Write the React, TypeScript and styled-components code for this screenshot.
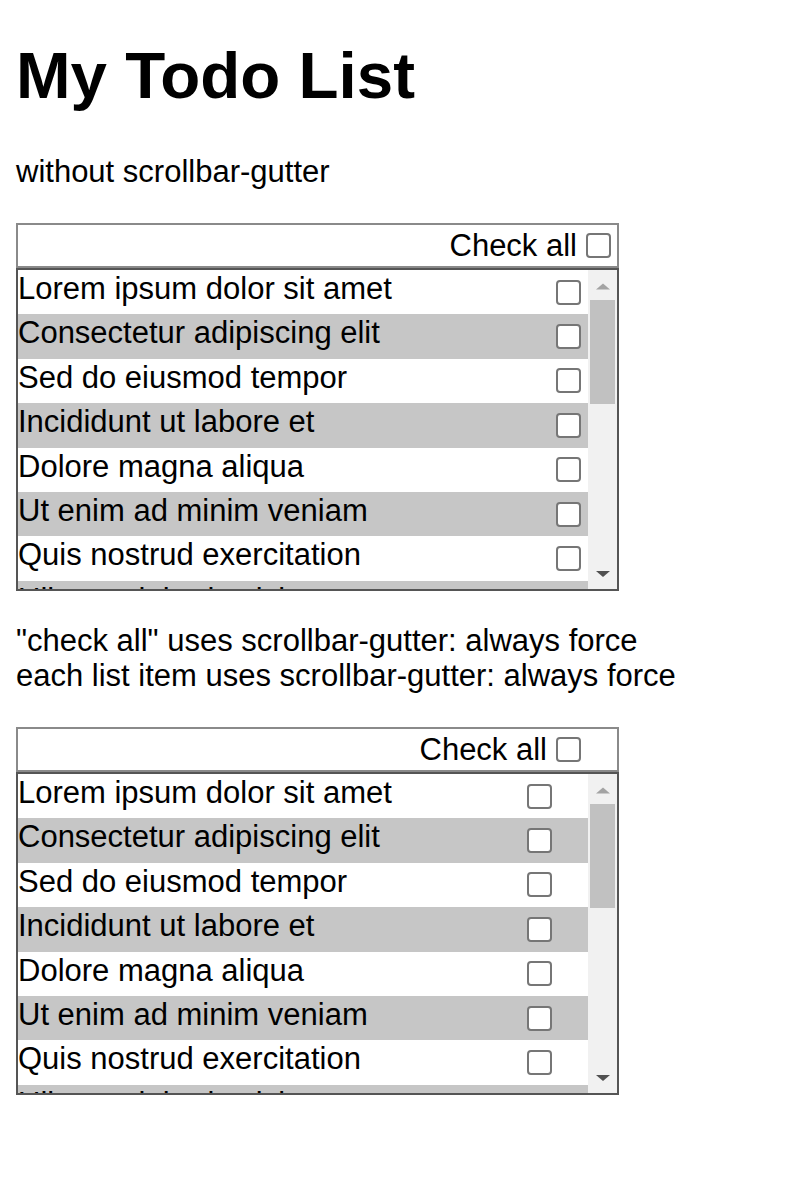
import React, { useState } from "react";
import styled, { createGlobalStyle } from "styled-components";

const GlobalStyle = createGlobalStyle`
  html, body {
    margin: 0;
    padding: 0;
    background: #ffffff;
  }
  body {
    font-family: "Liberation Sans", Arial, Helvetica, sans-serif;
    color: #000000;
  }
`;

const Page = styled.main`
  padding: 0 16px 40px;
  font-size: 31px;
  line-height: 36px;
`;

const Title = styled.h1`
  margin: 39px 0 0;
  font-size: 65.5px;
  line-height: 74px;
  font-weight: 700;
`;

const Note = styled.p<{ $top: number }>`
  margin: ${(p) => p.$top}px 0 0;
  line-height: 35px;
`;

const Container = styled.section`
  margin-top: 34px;
  width: 603px;
  display: flex;
  flex-direction: column;
`;

const CheckAllBar = styled.label<{ $gutter: boolean }>`
  display: flex;
  justify-content: flex-end;
  align-items: center;
  height: 41px;
  border: 2px solid #8a8a8a;
  padding-right: ${(p) => (p.$gutter ? 30 : 0)}px;
  cursor: pointer;
`;

const Box = styled.input.attrs({ type: "checkbox" })<{ $right: number }>`
  appearance: none;
  -webkit-appearance: none;
  box-sizing: border-box;
  flex: none;
  width: 25px;
  height: 25px;
  margin: 0 ${(p) => p.$right}px 0 9px;
  border: 2px solid #767676;
  border-radius: 4px;
  background: #ffffff;
  cursor: pointer;

  &:checked {
    background: #0075ff;
    border-color: #0075ff;
  }
`;

const ListFrame = styled.div`
  display: flex;
  height: 319px;
  border: 2px solid #555555;
`;

const Items = styled.ul`
  list-style: none;
  margin: 0;
  padding: 0;
  flex: 1;
  min-width: 0;
  overflow: hidden;
`;

const Item = styled.li<{ $alt: boolean; $gutter: boolean }>`
  display: flex;
  justify-content: space-between;
  align-items: center;
  height: 44.4px;
  background: ${(p) => (p.$alt ? "#c6c6c6" : "transparent")};
  padding-right: ${(p) => (p.$gutter ? 29 : 0)}px;
  white-space: nowrap;
`;

const ItemText = styled.span`
  align-self: flex-start;
  padding-top: 1px;
  line-height: 36px;
`;

const Scrollbar = styled.div`
  flex: none;
  width: 29px;
  background: #f1f1f1;
  display: flex;
  flex-direction: column;
  align-items: center;
`;

const ScrollButton = styled.div`
  flex: none;
  width: 29px;
  height: 29px;
  display: flex;
`;

const Thumb = styled.div`
  flex: none;
  width: 25px;
  height: 104px;
  margin-top: 1px;
  background: #c1c1c1;
`;

const Track = styled.div`
  flex: 1;
`;

const todos = [
  "Lorem ipsum dolor sit amet",
  "Consectetur adipiscing elit",
  "Sed do eiusmod tempor",
  "Incididunt ut labore et",
  "Dolore magna aliqua",
  "Ut enim ad minim veniam",
  "Quis nostrud exercitation",
  "Ullamco laboris nisi ut",
  "Aliquip ex ea commodo",
  "Duis aute irure dolor",
  "In reprehenderit in voluptate",
  "Velit esse cillum dolore",
  "Eu fugiat nulla pariatur",
  "Excepteur sint occaecat",
  "Cupidatat non proident",
  "Sunt in culpa qui officia",
  "Deserunt mollit anim",
  "Id est laborum",
  "Sed ut perspiciatis unde",
  "Omnis iste natus error",
];

const UpArrow = () => (
  <svg width="29" height="29" viewBox="0 0 29 29">
    <polygon points="8,19.5 22,19.5 15,13.5" fill="#a3a3a3" />
  </svg>
);

const DownArrow = () => (
  <svg width="29" height="29" viewBox="0 0 29 29">
    <polygon points="8,11 22,11 15,17" fill="#505050" />
  </svg>
);

function TodoBlock({ gutter }: { gutter: boolean }) {
  const [checked, setChecked] = useState<boolean[]>(() => todos.map(() => false));
  const all = checked.every(Boolean);

  return (
    <Container>
      <CheckAllBar $gutter={gutter}>
        Check all
        <Box
          $right={6}
          checked={all}
          onChange={(e) => setChecked(todos.map(() => e.target.checked))}
        />
      </CheckAllBar>
      <ListFrame>
        <Items>
          {todos.map((t, i) => (
            <Item key={t} $alt={i % 2 === 1} $gutter={gutter}>
              <ItemText>{t}</ItemText>
              <Box
                $right={7}
                checked={checked[i]}
                onChange={(e) =>
                  setChecked((prev) => prev.map((v, j) => (j === i ? e.target.checked : v)))
                }
              />
            </Item>
          ))}
        </Items>
        <Scrollbar>
          <ScrollButton>
            <UpArrow />
          </ScrollButton>
          <Thumb />
          <Track />
          <ScrollButton>
            <DownArrow />
          </ScrollButton>
        </Scrollbar>
      </ListFrame>
    </Container>
  );
}

export default function App() {
  return (
    <>
      <GlobalStyle />
      <Page>
        <Title>My Todo List</Title>
        <Note $top={41}>without scrollbar-gutter</Note>
        <TodoBlock gutter={false} />
        <Note $top={32}>
          "check all" uses scrollbar-gutter: always force
          <br />
          each list item uses scrollbar-gutter: always force
        </Note>
        <TodoBlock gutter={true} />
      </Page>
    </>
  );
}
